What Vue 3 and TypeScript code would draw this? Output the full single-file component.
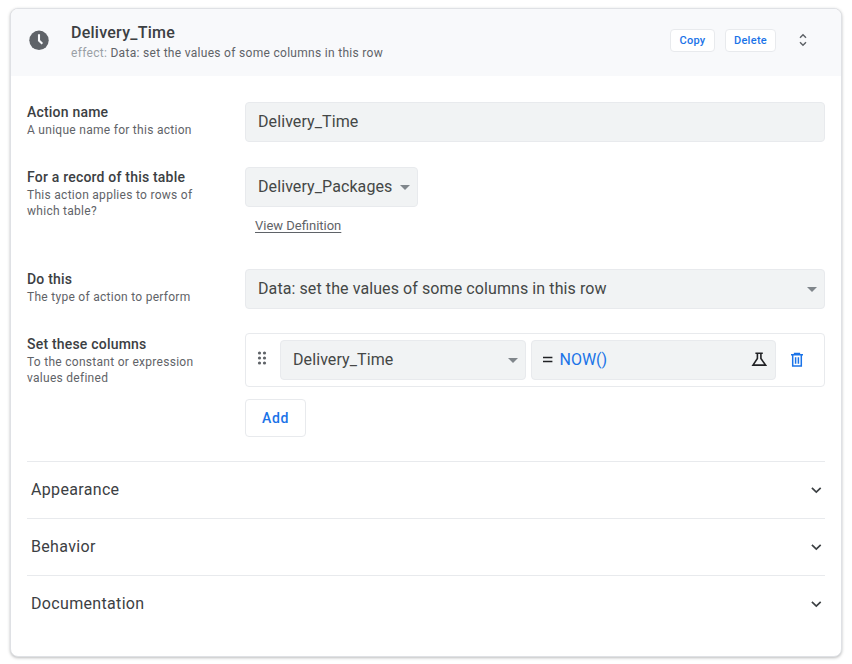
<script setup lang="ts">
import { ref } from 'vue'

const actionName = ref('Delivery_Time')
const sections: string[] = ['Appearance', 'Behavior', 'Documentation']
</script>

<template>
  <main class="page">
  <div class="card">
    <header class="head">
      <svg class="clock" viewBox="0 0 20 20" width="20" height="20">
        <circle cx="10" cy="10.3" r="9.7" fill="#5f6368" />
        <path d="M10 4.3v6.2l3.3 3.3" fill="none" stroke="#f8f9fb" stroke-width="2.1" />
      </svg>
      <div class="heading">
        <h1 class="title">{{ actionName }}</h1>
        <p class="effect"><span>effect:</span> Data: set the values of some columns in this row</p>
      </div>
      <button class="small copy">Copy</button>
      <button class="small delete">Delete</button>
      <svg class="sort" viewBox="0 0 12 14" width="12" height="14">
        <path d="M3 4.7 6 1.8 9 4.7M3 9.3 6 12.2 9 9.3" fill="none" stroke="#5f6368" stroke-width="1.5" />
      </svg>
    </header>

    <div class="body">
      <section class="row r1">
        <div class="label"><h2>Action name</h2><p>A unique name for this action</p></div>
        <div class="field"><span class="value">{{ actionName }}</span></div>
      </section>

      <section class="row r2">
        <div class="label"><h2>For a record of this table</h2><p>This action applies to rows of<br />which table?</p></div>
        <div class="control">
          <div class="field table"><span class="value">Delivery_Packages</span><i class="caret"></i></div>
          <a class="link">View Definition</a>
        </div>
      </section>

      <section class="row r3">
        <div class="label"><h2>Do this</h2><p>The type of action to perform</p></div>
        <div class="field"><span class="value">Data: set the values of some columns in this row</span><i class="caret"></i></div>
      </section>

      <section class="row r4">
        <div class="label"><h2>Set these columns</h2><p>To the constant or expression<br />values defined</p></div>
        <div class="control">
          <div class="assign">
            <svg class="grip" viewBox="0 0 10 14" width="10" height="14" fill="#5f6368">
              <circle cx="2.5" cy="2" r="1.6" /><circle cx="7.5" cy="2" r="1.6" />
              <circle cx="2.5" cy="7" r="1.6" /><circle cx="7.5" cy="7" r="1.6" />
              <circle cx="2.5" cy="12" r="1.6" /><circle cx="7.5" cy="12" r="1.6" />
            </svg>
            <div class="field column"><span class="value">Delivery_Time</span><i class="caret"></i></div>
            <div class="field formula">
              <svg class="equals" viewBox="0 0 10 8" width="10" height="8"><path d="M0 1.5h9.4M0 5.5h9.4" stroke="#202124" stroke-width="1.4" /></svg>
              <span class="expr">NOW()</span>
              <svg class="flask" viewBox="0 0 16 16" width="16" height="16">
                <path d="M4.4 1.2h7.4M6.4 1.6v4.9L2 13.1h12.6L9.9 6.5V1.6" fill="none" stroke="#202124" stroke-width="1.6" />
              </svg>
            </div>
            <svg class="trash" viewBox="0 0 14 16" width="14" height="16">
              <path d="M1 2.8h12M4.6 2.2V1.5h4.8v.7M2.7 3v11h8.6V3M5.6 5.2v6.6M8.4 5.2v6.6" fill="none" stroke="#1a73e8" stroke-width="1.5" />
            </svg>
          </div>
          <button class="add">Add</button>
        </div>
      </section>

      <section v-for="name in sections" :key="name" class="section">
        <span>{{ name }}</span>
        <svg viewBox="0 0 12 8" width="12" height="8"><path d="M1.9 1.8 6.3 6 10.7 1.8" fill="none" stroke="#3c4043" stroke-width="1.7" /></svg>
      </section>
    </div>
  </div>
  </main>
</template>

<style>
body { margin: 0; background: #fff; }
</style>

<style scoped>
* { box-sizing: border-box; }
h1, h2, p { margin: 0; }
svg { display: block; flex: none; }
button { font-family: Roboto, sans-serif; background: #fff; border: 1px solid #e8eaed; border-radius: 4px; padding: 0; color: #1a73e8; }
.page { height: 664px; padding: 8px 9px 0 10px; font-family: Roboto, "Liberation Sans", sans-serif; }
.card { width: 832px; height: 649px; border: 1px solid #dfe1e5; border-radius: 8px; background: #fff; overflow: hidden; box-shadow: 0 1px 3px rgba(60, 64, 67, .35); }
.head { height: 67px; background: #f8f9fb; display: flex; padding: 0 32px 0 18px; }
.clock { margin-top: 21px; }
.heading { margin-left: 22px; flex: 1; }
.title { margin-top: 14px; font-size: 16px; line-height: 20px; font-weight: 500; color: #3c4043; letter-spacing: .25px; white-space: nowrap; }
.effect { margin-top: 2px; font-size: 12px; line-height: 16px; letter-spacing: .3px; color: #5f6368; white-space: nowrap; }
.effect span { color: #9aa0a6; }
.small { margin-top: 20px; height: 23px; font-size: 11px; font-weight: 500; letter-spacing: .3px; }
.copy { width: 45px; }
.delete { width: 51px; margin-left: 10px; }
.sort { margin: 24px 0 0 21px; }
.body { padding: 26px 16px 0; }
.row { display: flex; justify-content: space-between; }
.r1 { height: 65px; }
.r2 { height: 102px; }
.r3 { height: 64px; }
.r4 { height: 128px; }
.label { width: 218px; white-space: nowrap; }
h2 { margin-top: 2px; font-size: 14px; line-height: 17px; font-weight: 500; color: #3c4043; letter-spacing: .2px; }
.r4 h2 { margin-top: 3px; }
.label p { margin-top: 1px; font-size: 12px; line-height: 16px; letter-spacing: .28px; color: #5f6368; }
.field { width: 580px; height: 40px; background: #f1f3f4; border: 1px solid #e8eaed; border-radius: 4px; display: flex; align-items: center; justify-content: space-between; padding: 0 7px 0 12px; font-size: 16px; line-height: 20px; color: #444746; white-space: nowrap; }
.value { letter-spacing: .09px; }
.table { width: 173px; }
.caret { border: 5px solid transparent; border-top-color: #80868b; border-bottom: 0; margin-top: 1px; }
.control { width: 580px; }
.link { display: block; width: max-content; margin: 10px 0 0 10px; font-size: 13px; line-height: 17px; color: #5f6368; text-decoration: underline; text-underline-offset: 2px; }
.assign { height: 54px; border: 1px solid #e8eaed; border-radius: 4px; display: flex; align-items: center; padding: 0 20px 0 11px; }
.grip { margin-bottom: 4px; }
.column { width: 246px; margin-left: 13px; }
.formula { width: 245px; margin-left: 5px; justify-content: flex-start; padding: 0 8px 0 11px; }
.expr { color: #1a73e8; margin-left: 6.5px; flex: 1; }
.trash { margin-left: 14px; }
.add { margin-top: 12px; width: 61px; height: 38px; font-size: 14px; font-weight: 500; letter-spacing: .6px; display: block; }
.section { height: 57px; border-top: 1px solid #e8eaed; display: flex; align-items: center; justify-content: space-between; padding: 0 3px 0 4px; font-size: 16px; line-height: 20px; letter-spacing: .33px; color: #3c4043; }
</style>
